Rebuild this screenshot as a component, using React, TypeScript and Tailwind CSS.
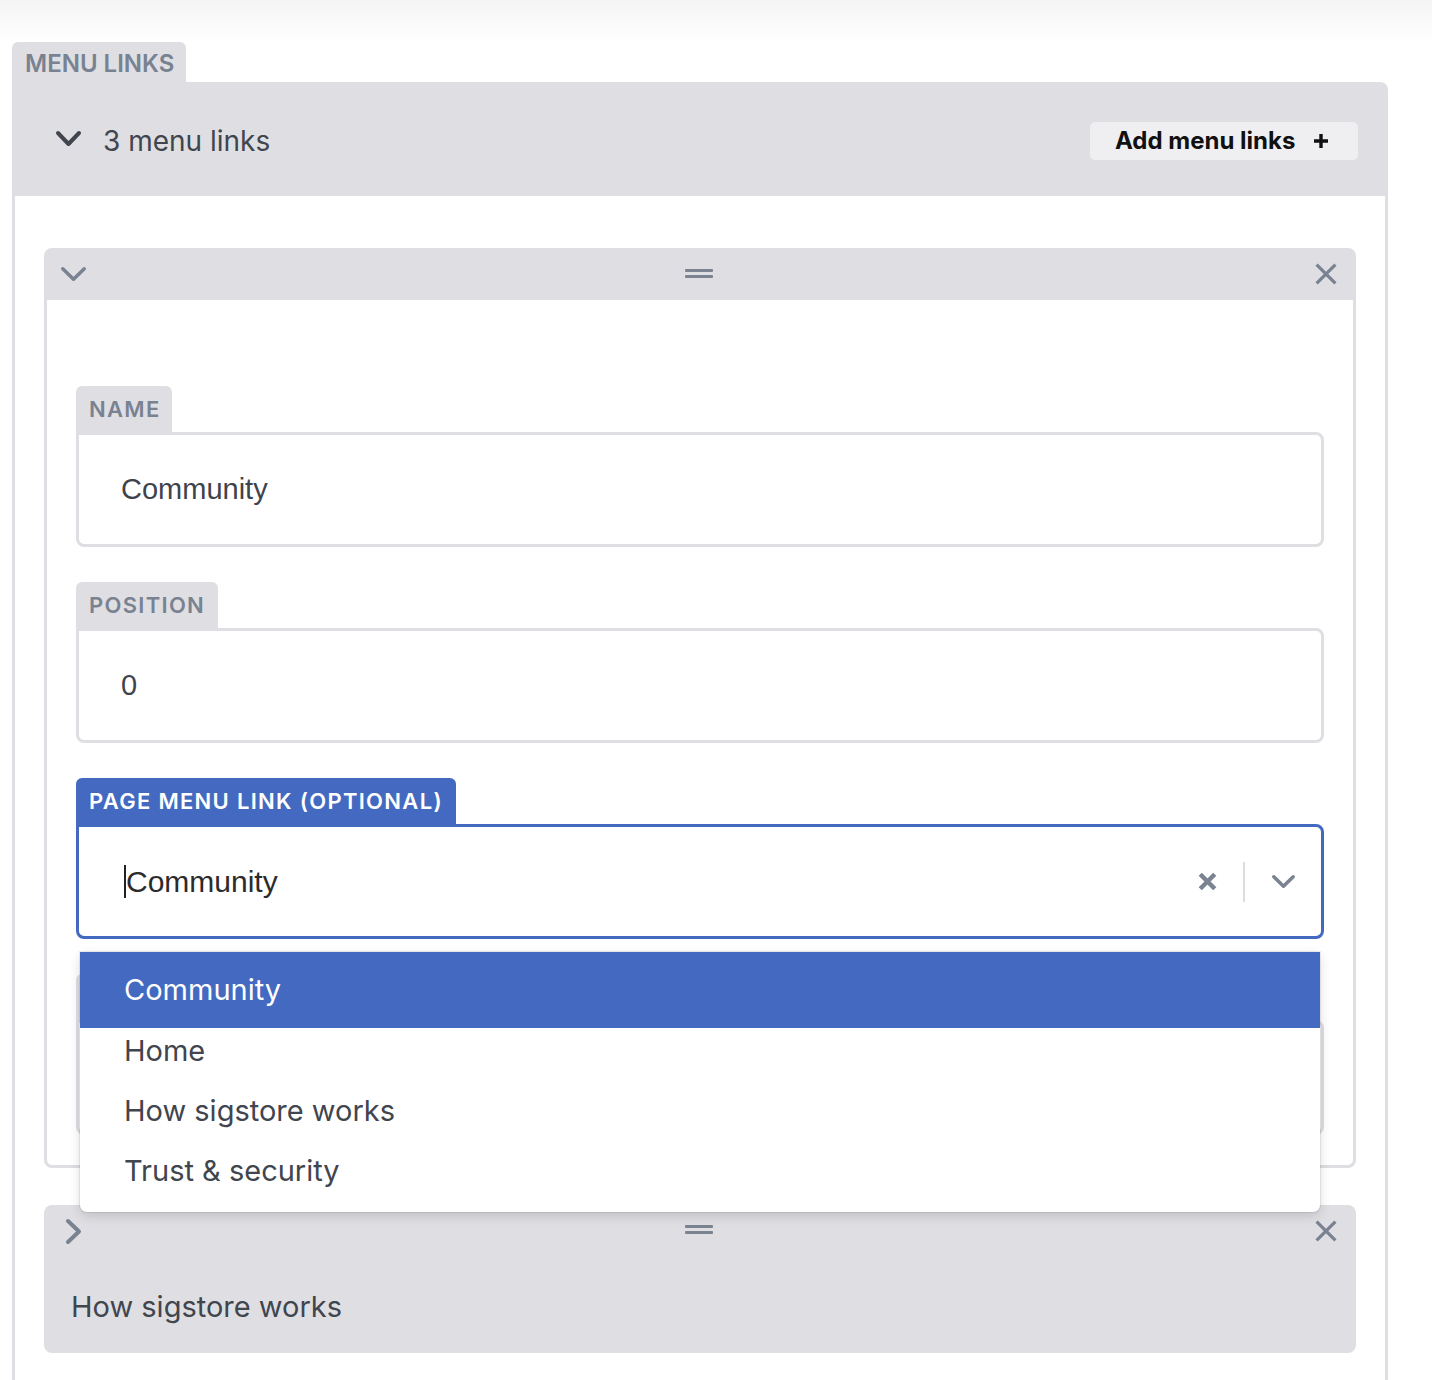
import React from "react";

const ChevronDown = ({ w, h, stroke, color }: { w: number; h: number; stroke: number; color: string }) => (
  <svg width={w} height={h} viewBox={`0 0 ${w} ${h}`} fill="none">
    <path
      d={`M${stroke / 2 + 1} ${stroke / 2 + 1} L${w / 2} ${h - stroke / 2 - 1} L${w - stroke / 2 - 1} ${stroke / 2 + 1}`}
      stroke={color}
      strokeWidth={stroke}
      strokeLinecap="round"
      strokeLinejoin="round"
    />
  </svg>
);

const Cross = ({ size, stroke, color }: { size: number; stroke: number; color: string }) => (
  <svg width={size} height={size} viewBox={`0 0 ${size} ${size}`} fill="none">
    <path
      d={`M${stroke / 2} ${stroke / 2} L${size - stroke / 2} ${size - stroke / 2} M${size - stroke / 2} ${stroke / 2} L${stroke / 2} ${size - stroke / 2}`}
      stroke={color}
      strokeWidth={stroke}
    />
  </svg>
);

const Handle = () => (
  <svg width="28" height="10" viewBox="0 0 28 10">
    <rect x="0" y="0" width="28" height="3" rx="1" fill="#7b8391" />
    <rect x="0" y="6" width="28" height="3" rx="1" fill="#7b8391" />
  </svg>
);

function CardHeader({ open }: { open: boolean }) {
  return (
    <div className="flex h-[52px] items-center justify-between pl-[16px] pr-[19px]">
      <div className="flex w-[60px] items-center">
        {open ? (
          <ChevronDown w={27} h={16} stroke={3.5} color="#798291" />
        ) : (
          <svg width="18" height="27" viewBox="0 0 18 27" fill="none" className="ml-[5px]">
            <path d="M3 3 L14 13.5 L3 24" stroke="#798291" strokeWidth="4" strokeLinejoin="round" strokeLinecap="round" />
          </svg>
        )}
      </div>
      <div className={open ? "" : "mt-[-2px]"}>
        <Handle />
      </div>
      <div className="flex w-[60px] justify-end">
        <Cross size={22} stroke={3.2} color="#798291" />
      </div>
    </div>
  );
}

function Field({ label, width, value }: { label: string; width: number; value: string }) {
  return (
    <div>
      <div
        className="flex h-[46px] items-center whitespace-nowrap rounded-t-[6px] bg-[#dfdfe3] pl-[13px] text-[22px] font-semibold tracking-[1.3px] text-[#798291]"
        style={{ width }}
      >
        {label}
      </div>
      <div className="flex h-[115px] items-center rounded-[8px] rounded-tl-none border-[3px] border-[#dfdfe3] bg-white pl-[42px] font-['Liberation_Sans',Arial,sans-serif] text-[29px] text-[#3f434c]">
        {value}
      </div>
    </div>
  );
}

const options = ["Community", "Home", "How sigstore works", "Trust & security"];

export default function App() {
  return (
    <div className="relative h-[1380px] overflow-hidden bg-white font-['Inter',sans-serif]">
      <div className="h-[42px] bg-gradient-to-b from-[#f4f4f4] to-white" />
      <div className="ml-[12px] w-[1376px]">
        <div className="flex h-[40px] w-[174px] items-center rounded-t-[6px] bg-[#dfdfe3] pl-[13px] pt-[3px] text-[24px] font-semibold text-[#798291]">
          MENU LINKS
        </div>
        <div className="flex h-[114px] items-center justify-between rounded-tr-[8px] bg-[#dfdfe3] pl-[43px] pr-[30px]">
          <div className="mt-[4px] flex items-center gap-[21px] text-[28px] text-[#41454e]">
            <div className="mt-[-6px]">
              <ChevronDown w={27} h={17} stroke={4} color="#41454e" />
            </div>
            <span>3 menu links</span>
          </div>
          <button className="mt-[4px] flex h-[38px] w-[268px] items-center gap-[18px] rounded-[5px] bg-[#efeff1] pl-[25px] text-[24px] font-bold text-[#111]">
            <span>Add menu links</span>
            <svg width="16" height="16" viewBox="0 0 16 16">
              <path d="M8 1 V15 M1 8 H15" stroke="#111" strokeWidth="3.4" />
            </svg>
          </button>
        </div>

        <div className="flex flex-col gap-[37px] border-x-[3px] border-[#dfdfe3] px-[29px] pb-[80px] pt-[52px]">
          {/* open card */}
          <div className="relative z-10">
            <div className="rounded-t-[8px] bg-[#dfdfe3]">
              <CardHeader open />
            </div>
            <div className="flex flex-col gap-[35px] rounded-b-[8px] border-x-[3px] border-b-[3px] border-[#dfdfe3] bg-white px-[29px] pb-[30px] pt-[86px]">
              <Field label="NAME" width={96} value="Community" />
              <Field label="POSITION" width={142} value="0" />

              <div className="relative z-20">
                <div className="flex h-[46px] w-[380px] items-center whitespace-nowrap rounded-t-[6px] bg-[#436ac0] pl-[13px] text-[22px] font-semibold tracking-[1.3px] text-white">
                  PAGE MENU LINK (OPTIONAL)
                </div>
                <div className="flex h-[115px] items-center rounded-[8px] rounded-tl-none border-[3px] border-[#436ac0] bg-white pl-[45px] pr-[25px]">
                  <div className="flex flex-1 items-center font-['Liberation_Sans',Arial,sans-serif] text-[30px] text-[#2b2b2b]">
                    <span className="h-[33px] w-[2px] bg-[#222]" />
                    <span>Community</span>
                  </div>
                  <Cross size={19} stroke={4.5} color="#7b8391" />
                  <span className="mx-[26px] h-[40px] w-[2px] bg-[#dcdce0]" />
                  <ChevronDown w={25} h={15} stroke={3.6} color="#7b8391" />
                </div>

                <div className="absolute left-[4px] right-[4px] top-[174px] rounded-b-[7px] bg-white pb-[11px] shadow-[0_0_0_1px_rgba(0,0,0,0.07),0_4px_12px_rgba(0,0,0,0.14)]">
                  <div className="flex h-[76px] items-center bg-[#436ac0] pl-[44px] text-[29px] text-white">
                    {options[0]}
                  </div>
                  <div className="mt-[-7px]">
                    {options.slice(1).map((o) => (
                      <div key={o} className="flex h-[60px] items-center pl-[44px] text-[29px] text-[#41454e]">
                        {o}
                      </div>
                    ))}
                  </div>
                </div>
              </div>

              <Field label="" width={80} value="" />
            </div>
          </div>

          {/* collapsed card */}
          <div className="h-[148px] rounded-[8px] bg-[#dfdfe3]">
            <CardHeader open={false} />
            <div className="pl-[27px] pt-[32px] text-[29px] leading-[36px] text-[#41454e]">How sigstore works</div>
          </div>
        </div>
      </div>
    </div>
  );
}
